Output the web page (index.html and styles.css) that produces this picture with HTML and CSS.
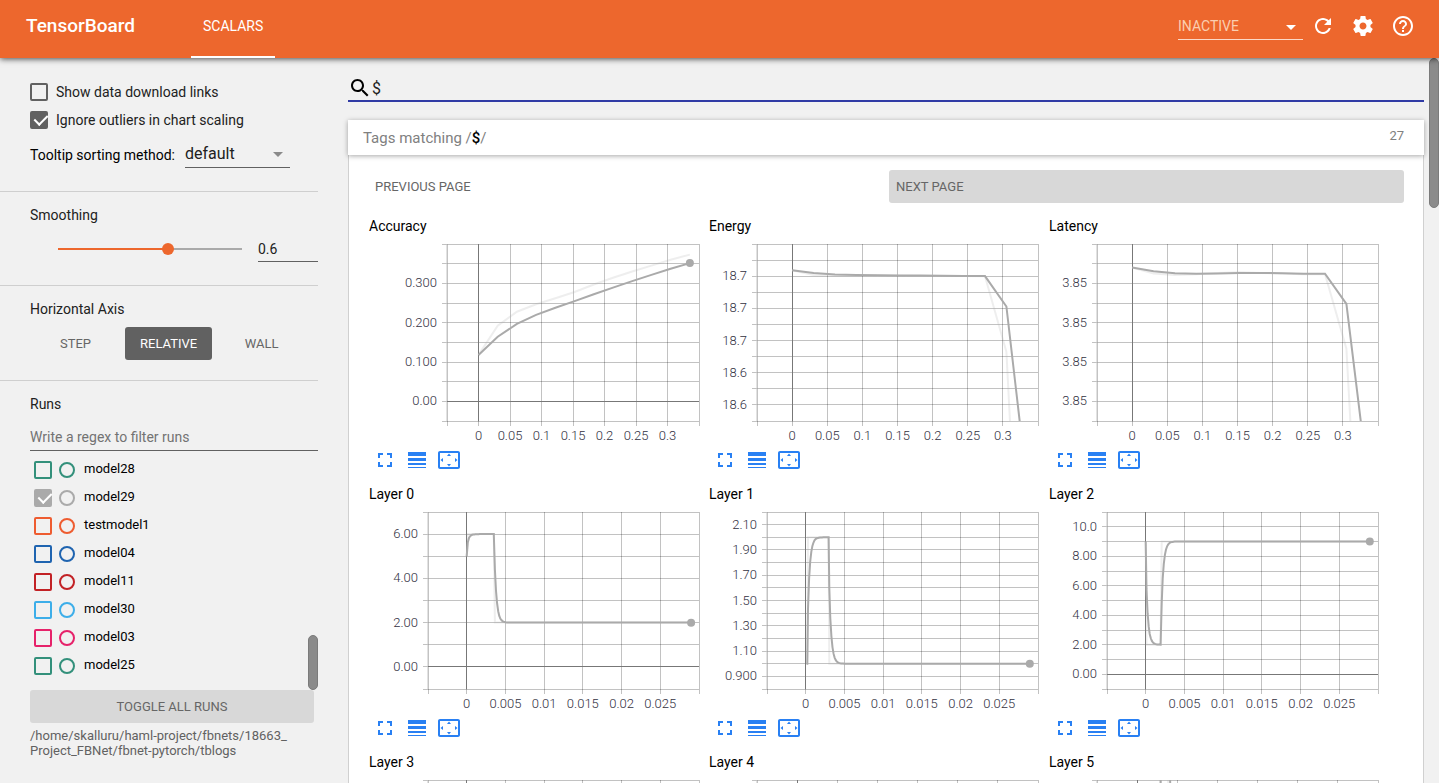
FILE: index.html
```
<!DOCTYPE html>
<html lang="en">
<head>
  <meta charset="utf-8">
  <title>TensorBoard</title>
  <link rel="stylesheet" href="styles.css">
</head>
<body>
  <svg class="sprite">
    <symbol id="expand" viewBox="0 0 24 24"><path d="M7 14H5v5h5v-2H7v-3zm-2-4h2V7h3V5H5v5zm12 7h-3v2h5v-5h-2v3zM14 5v2h3v3h2V5h-5z"/></symbol>
    <symbol id="lines" viewBox="0 0 24 24"><path d="M3 17h18v-2H3v2zm0 3h18v-1H3v1zm0-7h18v-3H3v3zm0-9v4h18V4H3z"/></symbol>
    <symbol id="fit" viewBox="0 0 24 24"><path d="M12.01 5.5L10 8h4l-1.99-2.5zM18 10v4l2.5-1.99L18 10zM6 10l-2.5 2.01L6 14v-4zm8 6h-4l2.01 2.5L14 16zm7-13H3c-1.1 0-2 .9-2 2v14c0 1.1.9 2 2 2h18c1.1 0 2-.9 2-2V5c0-1.1-.9-2-2-2zm0 16.01H3V4.99h18v14.02z"/></symbol>
  </svg>

  <header class="toolbar">
    <h1 class="brand">TensorBoard</h1>
    <a href="#scalars" class="tab">SCALARS</a>
    <div class="select reload">
      <select aria-label="Plugins">
        <option>INACTIVE</option>
      </select>
    </div>
    <button class="icon-button" aria-label="Reload">
      <svg viewBox="0 0 24 24"><path d="M17.65 6.35C16.2 4.9 14.21 4 12 4c-4.42 0-7.99 3.58-7.99 8s3.57 8 7.99 8c3.73 0 6.84-2.55 7.73-6h-2.08c-.82 2.33-3.04 4-5.65 4-3.31 0-6-2.69-6-6s2.69-6 6-6c1.66 0 3.14.69 4.22 1.78L13 11h7V4l-2.35 2.35z"/></svg>
    </button>
    <button class="icon-button" aria-label="Settings">
      <svg viewBox="0 0 24 24"><path d="M19.43 12.98c.04-.32.07-.64.07-.98s-.03-.66-.07-.98l2.11-1.65c.19-.15.24-.42.12-.64l-2-3.46c-.12-.22-.39-.3-.61-.22l-2.49 1c-.52-.4-1.08-.73-1.69-.98l-.38-2.65C14.46 2.18 14.25 2 14 2h-4c-.25 0-.46.18-.49.42l-.38 2.65c-.61.25-1.17.59-1.69.98l-2.49-1c-.23-.09-.49 0-.61.22l-2 3.46c-.13.22-.07.49.12.64l2.11 1.65c-.04.32-.07.65-.07.98s.03.66.07.98l-2.11 1.65c-.19.15-.24.42-.12.64l2 3.46c.12.22.39.3.61.22l2.49-1c.52.4 1.08.73 1.69.98l.38 2.65c.03.24.24.42.49.42h4c.25 0 .46-.18.49-.42l.38-2.65c.61-.25 1.17-.59 1.69-.98l2.49 1c.23.09.49 0 .61-.22l2-3.46c.12-.22.07-.49-.12-.64l-2.11-1.65zM12 15.5c-1.93 0-3.5-1.57-3.5-3.5s1.57-3.5 3.5-3.5 3.5 1.57 3.5 3.5-1.57 3.5-3.5 3.5z"/></svg>
    </button>
    <button class="icon-button" aria-label="Help">
      <svg viewBox="0 0 24 24"><path d="M11 18h2v-2h-2v2zm1-16C6.48 2 2 6.48 2 12s4.48 10 10 10 10-4.48 10-10S17.52 2 12 2zm0 18c-4.41 0-8-3.59-8-8s3.59-8 8-8 8 3.59 8 8-3.59 8-8 8zm0-14c-2.21 0-4 1.79-4 4h2c0-1.1.9-2 2-2s2 .9 2 2c0 2-3 1.75-3 5h2c0-2.25 3-2.5 3-5 0-2.21-1.79-4-4-4z"/></svg>
    </button>
  </header>

  <div class="page">
    <aside class="sidebar">
      <section class="settings options">
        <label class="option"><input type="checkbox" class="check"> Show data download links</label>
        <label class="option"><input type="checkbox" class="check" checked> Ignore outliers in chart scaling</label>
        <div class="sorting">
          <label for="sorting">Tooltip sorting method:</label>
          <div class="select">
            <select id="sorting">
              <option>default</option>
            </select>
          </div>
        </div>
      </section>

      <section class="settings">
        <h3><label for="smoothing">Smoothing</label></h3>
        <div class="smoothing">
          <input type="range" id="smoothing" class="slider" min="0" max="1" step="0.1" value="0.6">
          <input type="text" class="number" aria-label="Smoothing value" value="0.6">
        </div>
      </section>

      <section class="settings axis">
        <h3>Horizontal Axis</h3>
        <div class="axis-buttons">
          <button class="button">STEP</button>
          <button class="button selected">RELATIVE</button>
          <button class="button">WALL</button>
        </div>
      </section>

      <section class="runs">
        <h3>Runs</h3>
        <input type="text" class="filter" aria-label="Filter runs" placeholder="Write a regex to filter runs">
        <div class="run-list">
          <div class="run teal"><input type="checkbox" class="check" id="r28"><input type="radio" name="run" aria-label="Only model28"><label for="r28">model28</label></div>
          <div class="run grey"><input type="checkbox" class="check" id="r29" checked><input type="radio" name="run" aria-label="Only model29"><label for="r29">model29</label></div>
          <div class="run orange"><input type="checkbox" class="check" id="rt1"><input type="radio" name="run" aria-label="Only testmodel1"><label for="rt1">testmodel1</label></div>
          <div class="run blue"><input type="checkbox" class="check" id="r04"><input type="radio" name="run" aria-label="Only model04"><label for="r04">model04</label></div>
          <div class="run red"><input type="checkbox" class="check" id="r11"><input type="radio" name="run" aria-label="Only model11"><label for="r11">model11</label></div>
          <div class="run cyan"><input type="checkbox" class="check" id="r30"><input type="radio" name="run" aria-label="Only model30"><label for="r30">model30</label></div>
          <div class="run pink"><input type="checkbox" class="check" id="r03"><input type="radio" name="run" aria-label="Only model03"><label for="r03">model03</label></div>
          <div class="run teal"><input type="checkbox" class="check" id="r25"><input type="radio" name="run" aria-label="Only model25"><label for="r25">model25</label></div>
          <div class="thumb"></div>
        </div>
        <button class="button toggle">TOGGLE ALL RUNS</button>
        <div class="logdir">/home/skalluru/haml-project/fbnets/18663_<br>Project_FBNet/fbnet-pytorch/tblogs</div>
      </section>
    </aside>

    <main class="center" id="scalars">
      <div class="search">
        <svg viewBox="0 0 24 24"><path d="M15.5 14h-.79l-.28-.27C15.41 12.59 16 11.11 16 9.5 16 5.91 13.09 3 9.5 3S3 5.91 3 9.5 5.91 16 9.5 16c1.61 0 3.09-.59 4.23-1.57l.27.28v.79l5 4.99L20.49 19l-4.99-5zm-6 0C7.01 14 5 11.99 5 9.5S7.01 5 9.5 5 14 7.01 14 9.5 11.99 14 9.5 14z"/></svg>
        <input type="text" aria-label="Filter tags" value="$">
      </div>
      <div class="category">
        <h2>Tags matching /<b>$</b>/</h2>
        <span class="count">27</span>
      </div>
      <div class="panel">
        <div class="pager">
          <button class="button" disabled>PREVIOUS PAGE</button>
          <button class="button next">NEXT PAGE</button>
        </div>
        <div class="cards" id="cards"></div>
      </div>
      <div class="thumb"></div>
    </main>
  </div>
  <script src="charts.js"></script>
</body>
</html>
```
FILE: styles.css
```
* {
  box-sizing: border-box;
}
body {
  margin: 0;
  height: 100vh;
  display: flex;
  flex-direction: column;
  overflow: hidden;
  background: #f1f1f1;
  color: #212121;
  font-family: Roboto, "Liberation Sans", sans-serif;
  font-size: 14px;
  line-height: 20px;
}
h1, h2, h3 {
  margin: 0;
  font-weight: 400;
}
input, select, button {
  font-family: inherit;
  font-size: inherit;
  color: inherit;
  margin: 0;
  padding: 0;
  border: 0;
  border-radius: 0;
  background: none;
  outline: none;
}
.sprite {
  display: none;
}

/* top bar */
.toolbar {
  flex: none;
  display: flex;
  align-items: center;
  height: 58px;
  padding: 0 16px 6px 26px;
  background: #ed672d;
  color: #fff;
  box-shadow: 0 1px 6px rgba(0, 0, 0, 0.7);
  position: relative;
  z-index: 2;
}
.brand {
  font-size: 19px;
  font-weight: 500;
  width: 165px;
}
.tab {
  align-self: stretch;
  display: flex;
  align-items: center;
  margin-bottom: -6px;
  padding: 2px 12px 6px;
  border-bottom: 2px solid #fff;
  color: #fff;
  text-decoration: none;
}
.icon-button {
  width: 40px;
  height: 40px;
  padding: 8px;
}
.icon-button svg {
  display: block;
  fill: #fff;
}
.select {
  position: relative;
  border-bottom: 1px solid #616161;
}
.select select {
  appearance: none;
  display: block;
  width: 100%;
  height: 27px;
  font-size: 16px;
}
.select::after {
  content: "";
  position: absolute;
  right: 7px;
  top: 12px;
  border: 5px solid transparent;
  border-top-color: #8a8a8a;
  border-bottom: 0;
  pointer-events: none;
}
.reload {
  width: 125px;
  margin-left: auto;
  border-color: #fbd9c8;
}
.reload select {
  height: 26px;
  font-size: 14px;
  color: #fbceb0;
}
.reload::after {
  border-top-color: #fff;
}

.page {
  flex: 1;
  display: flex;
  min-height: 0;
}

/* left column */
.sidebar {
  flex: none;
  width: 318px;
  margin-right: 30px;
}
.settings {
  padding: 13px 0 23px 30px;
  border-bottom: 1px solid #cfcfcf;
}
.options {
  padding-top: 20px;
}
.option {
  display: flex;
  align-items: center;
  gap: 8px;
  height: 28px;
}
.check {
  appearance: none;
  flex: none;
  width: 18px;
  height: 18px;
  border: 2px solid #616161;
  border-radius: 2px;
}
.check:checked {
  padding-left: 5px;
  background: #616161;
}
.check:checked::after {
  content: "";
  display: block;
  width: 6px;
  height: 11px;
  border: solid #fff;
  border-width: 0 2px 2px 0;
  transform: translateY(-1px) rotate(45deg);
}
.sorting {
  display: flex;
  align-items: center;
  gap: 10px;
  margin-top: 6px;
  color: #000;
}
.sorting label {
  padding-top: 2px;
}
.sorting .select {
  width: 105px;
  color: #212121;
}
h3 {
  font-size: 14px;
}
.smoothing {
  display: flex;
  align-items: center;
  gap: 10px;
  margin-top: 11px;
  padding-left: 22px;
}
.slider {
  appearance: none;
  flex: 1;
  min-width: 0;
  height: 12px;
  background:
    linear-gradient(#ed672d, #ed672d) 6px center / calc((100% - 12px) * 0.6) 2px no-repeat,
    linear-gradient(#aaa, #aaa) 6px center / calc(100% - 12px) 2px no-repeat;
}
.slider::-webkit-slider-thumb {
  appearance: none;
  width: 12px;
  height: 12px;
  border-radius: 50%;
  background: #ed672d;
}
.number {
  width: 60px;
  height: 26px;
  border-bottom: 1px solid #616161;
}
.axis {
  padding-bottom: 20px;
}
.axis-buttons {
  display: flex;
  gap: 16px;
  margin-top: 8px;
  padding-left: 12px;
}
.button {
  min-width: 67px;
  height: 33px;
  border-radius: 3px;
  font-size: 13px;
  color: #666;
}
.selected {
  padding: 0 15px;
  background: #616161;
  color: #fff;
}
.runs {
  padding: 13px 0 0 30px;
}
.filter {
  display: block;
  width: 100%;
  height: 27px;
  margin-top: 10px;
  border-bottom: 1px solid #616161;
}
.filter::placeholder {
  color: #737373;
}
.run-list {
  position: relative;
  height: 239px;
  padding: 4px 0 0 4px;
}
.run {
  display: flex;
  align-items: center;
  gap: 7px;
  height: 28px;
  padding-top: 2px;
}
.run label {
  margin-left: 2px;
  padding-bottom: 2px;
  font-size: 13px;
  color: #000;
}
.run .check {
  border-color: currentColor;
}
.run .check:checked {
  background: currentColor;
}
.run [type=radio] {
  appearance: none;
  width: 16px;
  height: 16px;
  border: 2px solid currentColor;
  border-radius: 50%;
}
.teal { color: #33907b; }
.grey { color: #aaa; }
.orange { color: #ee5c30; }
.blue { color: #1f64b0; }
.red { color: #c22125; }
.cyan { color: #3daee9; }
.pink { color: #e6226a; }
.thumb {
  position: absolute;
  right: 0;
  bottom: 0;
  width: 10px;
  height: 55px;
  border: 1px solid #7b7b7b;
  border-radius: 5px;
  background: #8b8b8b;
}
.toggle {
  width: calc(100% - 4px);
  background: #d8d8d8;
}
.logdir {
  margin-top: 5px;
  font-size: 13px;
  line-height: 15px;
  color: #616161;
}

/* tags and charts */
.center {
  position: relative;
  flex: 1;
  min-width: 0;
  padding: 16px 15px 0 0;
}
.center > .thumb {
  top: 0;
  height: 150px;
}
.search {
  display: flex;
  align-items: center;
  height: 28px;
  border-bottom: 2px solid #303ba5;
}
.search svg {
  flex: none;
  width: 24px;
  height: 24px;
  margin-top: 2px;
}
.search input {
  flex: 1;
  height: 26px;
  padding-top: 2px;
  font-size: 16px;
}
.category {
  position: relative;
  display: flex;
  justify-content: space-between;
  height: 35px;
  margin-top: 18px;
  padding: 0 20px 0 15px;
  background: #fff;
  box-shadow: 0 1px 5px rgba(0, 0, 0, 0.35);
}
.category h2 {
  font-size: 15px;
  line-height: 36px;
  color: #808080;
}
.category b {
  font-weight: 500;
  color: #000;
}
.count {
  font-size: 13px;
  line-height: 31px;
  color: #808080;
}
.panel {
  padding: 15px 19px;
  background: #fff;
  border: 1px solid #d0d0d0;
  border-top: 0;
}
.pager {
  display: grid;
  grid-template-columns: 1fr 1fr;
  gap: 6px;
}
.pager .button {
  padding: 0 7px;
  text-align: left;
}
.next {
  background: #d8d8d8;
}
.cards {
  display: flex;
  flex-wrap: wrap;
  gap: 10px;
  margin: 13px 0 0 1px;
}
.card {
  width: 330px;
  color: #000;
}
.chart {
  display: block;
  width: 330px;
  height: 210px;
  overflow: visible;
}
.chart text {
  font-size: 13px;
  font-weight: 300;
  fill: #32313f;
}
.grid {
  stroke: #000;
  stroke-opacity: 0.24;
}
.edge {
  stroke: #c4c4c4;
}
.zero {
  stroke: #777;
  stroke-width: 1px;
}
.line, .raw {
  fill: none;
  stroke: #aaa;
  stroke-width: 2px;
}
.raw {
  stroke-opacity: 0.2;
}
.dot {
  fill: #aaa;
}
.actions {
  display: flex;
  height: 28px;
}
.actions button {
  width: 32px;
  padding: 2px 4px;
}
.actions svg {
  display: block;
  width: 24px;
  height: 24px;
  fill: #2980f3;
}
```
FILE: charts.js
```
var TOP = 8;
var BOTTOM = 185;
var WEIGHT = 0.6;

// repeat(value, from, to) gives a flat series of samples
function repeat(value, from, to) {
  var points = [];
  for (var x = from; x <= to; x += 0.00014) {
    points.push([x, value]);
  }
  return points;
}

function spaced(values) {
  return values.map(function (v, i) { return [i * 0.0305, v]; });
}

var wide = { min: -0.05, max: 0.35, step: 0.05 };
var short = { min: -0.005, max: 0.03, step: 0.005 };

var charts = [
  { name: "Accuracy", left: 78, right: 330, x: wide, y: { min: -0.05, max: 0.4, step: 0.05, first: 0 },
    data: spaced([0.118, 0.192, 0.228, 0.247, 0.262, 0.278, 0.297, 0.314, 0.33, 0.345, 0.36, 0.373]) },
  { name: "Energy", left: 48, right: 329, x: wide, y: { min: 18.61, max: 18.72, step: 0.01, first: 18.62 },
    data: spaced([18.7037, 18.7008, 18.7003, 18.7003, 18.7004, 18.7003, 18.7002, 18.7001, 18.7001, 18.6999, 18.653, 18.395]) },
  { name: "Latency", left: 48, right: 329, x: wide, y: { min: 3.847, max: 3.8515, step: 0.0005, first: 3.8475 },
    data: spaced([3.8509, 3.85075, 3.85071, 3.85073, 3.85076, 3.85078, 3.85076, 3.85075, 3.85073, 3.85074, 3.84884, 3.8389]) },
  { name: "Layer 0", left: 59, right: 330, x: short, y: { min: -1, max: 7, step: 1, first: 0 },
    data: [[0, 5]].concat(repeat(6, 0.00014, 0.0035), repeat(2, 0.00364, 0.029)) },
  { name: "Layer 1", left: 58, right: 329, x: short, y: { min: 0.8, max: 2.2, step: 0.1, first: 0.9 },
    data: [[0.0001, 1], [0.0002, 1], [0.0002, 1], [0.0002, 1]].concat(repeat(2, 0.0003, 0.003), repeat(1, 0.00304, 0.029)) },
  { name: "Layer 2", left: 58, right: 329, x: short, y: { min: -1, max: 11, step: 1, first: 0 },
    data: [[0, 9], [0, 9], [0, 9]].concat(repeat(2, 0.0001, 0.002), repeat(9, 0.00206, 0.029)) },
  { name: "Layer 3", left: 59, right: 330, x: short, y: { min: -1, max: 7, step: 1, first: 0 },
    data: repeat(3, 0, 0.029) },
  { name: "Layer 4", left: 48, right: 329, x: short, y: { min: -1, max: 7, step: 1, first: 0 },
    data: repeat(4, 0, 0.029) },
  { name: "Layer 5", left: 48, right: 329, x: short, y: { min: -1, max: 7, step: 1, first: 0 },
    data: repeat(2, 0, 0.0029).concat(repeat(20, 0.003, 0.0038), repeat(2, 0.0039, 0.029)) }
];

function smooth(data) {
  var last = 0;
  return data.map(function (p, i) {
    last = last * WEIGHT + (1 - WEIGHT) * p[1];
    return [p[0], last / (1 - Math.pow(WEIGHT, i + 1))];
  });
}

function line(cls, x1, y1, x2, y2) {
  return '<line class="' + cls + '" x1="' + x1 + '" y1="' + y1 + '" x2="' + x2 + '" y2="' + y2 + '"/>';
}

function drawChart(c) {
  var svg = "";
  var px = function (v) { return c.left + (v - c.x.min) / (c.x.max - c.x.min) * (c.right - c.left); };
  var py = function (v) { return BOTTOM - (v - c.y.min) / (c.y.max - c.y.min) * (BOTTOM - TOP); };
  var crisp = function (v) { return Math.round(v - 0.5) + 0.5; };
  var toPath = function (data) {
    return data.map(function (p) {
      return (px(p[0]) - c.left).toFixed(1) + "," + (py(p[1]) - TOP).toFixed(1);
    }).join(" ");
  };
  var cols = Math.round((c.x.max - c.x.min) / c.x.step);
  var rows = Math.round((c.y.max - c.y.min) / c.y.step);
  var labelled = Math.round((c.y.first - c.y.min) / c.y.step) % 2;

  for (var i = 0; i <= cols; i++) {
    var x = c.x.min + i * c.x.step;
    svg += line("grid", crisp(px(x)), TOP, crisp(px(x)), BOTTOM + 5);
    if (i > 0 && i < cols) {
      svg += '<text text-anchor="middle" x="' + px(x) + '" y="204">' + Number(x.toFixed(4)) + "</text>";
    }
  }
  for (var j = 0; j <= rows; j++) {
    var y = Number((c.y.min + j * c.y.step).toFixed(4));
    svg += line("grid", c.left - 5, crisp(py(y)), c.right, crisp(py(y)));
    if (j % 2 === labelled && j > 0 && j < rows) {
      svg += '<text text-anchor="end" x="' + (c.left - 10) + '" y="' + (py(y) + 4) + '">' + y.toPrecision(3) + "</text>";
    }
  }
  svg += line("edge", c.left, TOP, c.left, BOTTOM);
  svg += line("zero", crisp(px(0)), TOP, crisp(px(0)), BOTTOM);
  if (c.y.min < 0) {
    svg += line("zero", c.left, crisp(py(0)), c.right, crisp(py(0)));
  }

  var smoothed = smooth(c.data);
  var end = smoothed[smoothed.length - 1];
  svg += '<svg x="' + c.left + '" y="' + TOP + '" width="' + (c.right - c.left) + '" height="' + (BOTTOM - TOP) + '">' +
    '<polyline class="raw" points="' + toPath(c.data) + '"/>' +
    '<polyline class="line" points="' + toPath(smoothed) + '"/></svg>';
  if (end[1] > c.y.min) {
    svg += '<circle class="dot" r="4" cx="' + px(end[0]) + '" cy="' + py(end[1]) + '"/>';
  }
  return '<svg class="chart" viewBox="0 0 330 210">' + svg + "</svg>";
}

function action(icon, label) {
  return '<button aria-label="' + label + '"><svg><use href="#' + icon + '"/></svg></button>';
}

document.getElementById("cards").innerHTML = charts.map(function (c) {
  return '<div class="card"><div>' + c.name + "</div>" + drawChart(c) +
    '<div class="actions">' + action("expand", "Expand") + action("lines", "Toggle log scale") + action("fit", "Fit to data") + "</div></div>";
}).join("");
```
